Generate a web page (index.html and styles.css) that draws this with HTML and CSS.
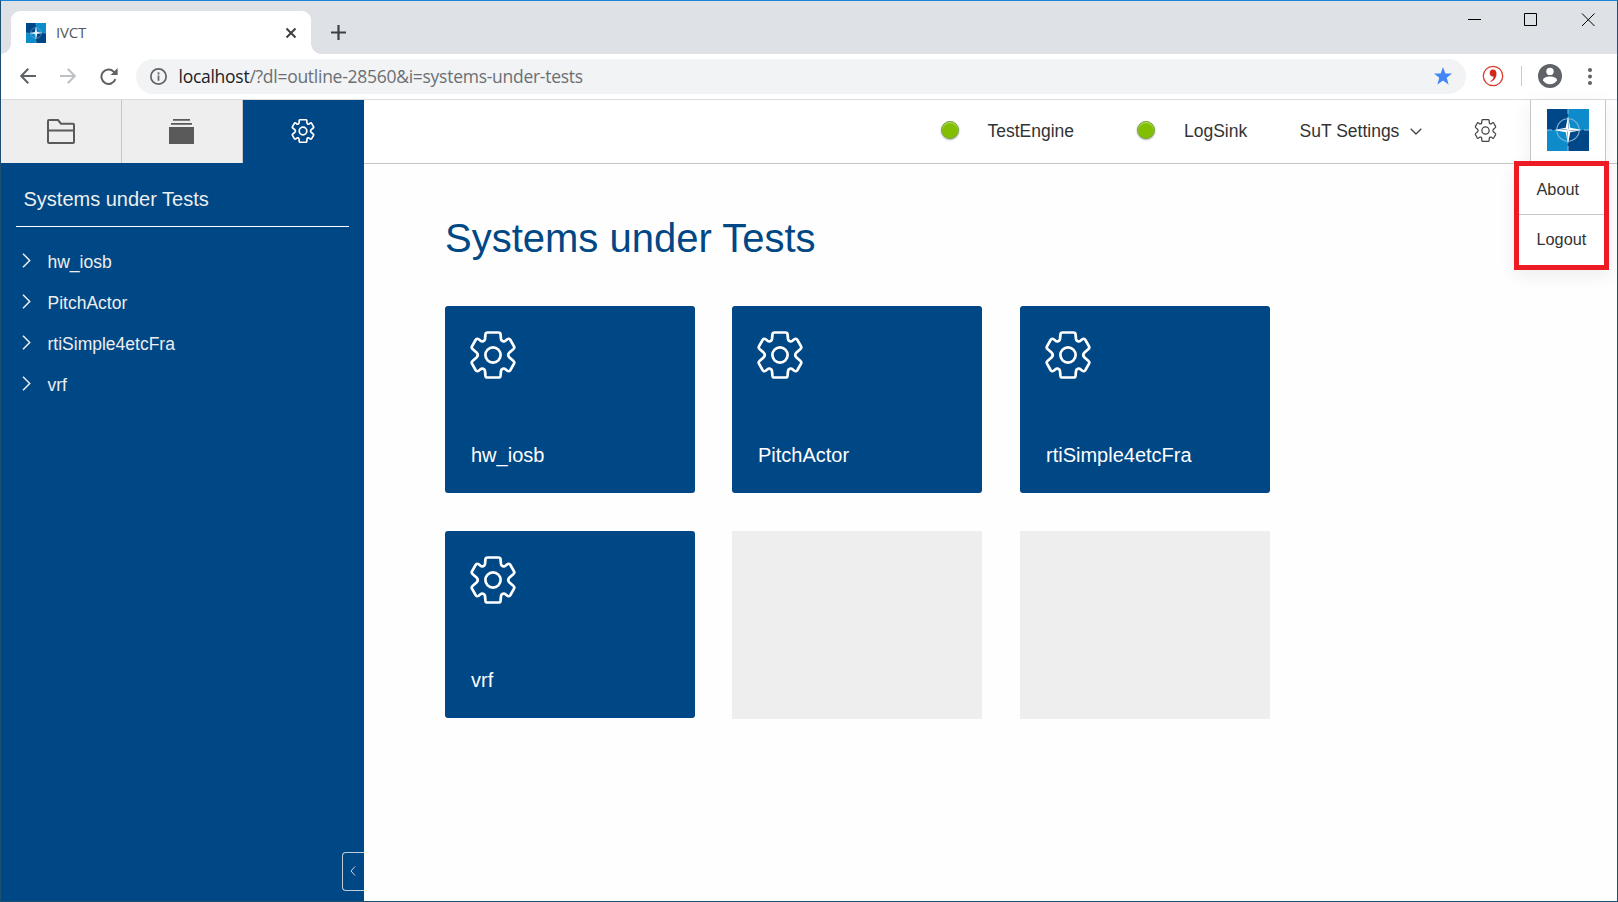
FILE: index.html
```html
<!DOCTYPE html>
<html lang="en">
<head>
<meta charset="utf-8">
<title>IVCT</title>
<link rel="stylesheet" href="styles.css">
</head>
<body>
<svg class="defs" aria-hidden="true">
  <symbol id="gear" viewBox="-24 -24 48 48">
    <path d="M-5.5-22.5H5.5Q7.3-22.5 7.5-21L8-16Q8.2-14.5 9.8-13.8Q11.3-13.2 12.5-14.2L14.3-15.7Q16-17 17.3-15.2L21-8.6Q21.8-7 20.5-6L16.5-2.6Q14 0 16.5 2.6L20.5 6Q21.8 7 21 8.6L17.3 15.2Q16 17 14.3 15.7L12.5 14.2Q11.3 13.2 9.8 13.8Q8.2 14.5 8 16L7.5 21Q7.3 22.5 5.5 22.5H-5.5Q-7.3 22.5-7.5 21L-8 16Q-8.2 14.5-9.8 13.8Q-11.3 13.2-12.5 14.2L-14.3 15.7Q-16 17-17.3 15.2L-21 8.6Q-21.8 7-20.5 6L-16.5 2.6Q-14 0-16.5-2.6L-20.5-6Q-21.8-7-21-8.6L-17.3-15.2Q-16-17-14.3-15.7L-12.5-14.2Q-11.3-13.2-9.8-13.8Q-8.2-14.5-8-16L-7.5-21Q-7.3-22.5-5.5-22.5Z"/>
    <circle r="7.6"/>
  </symbol>
  <symbol id="compass" viewBox="0 0 42 42">
    <path fill="#004787" d="M0 0h42v42H0z"/>
    <path fill="#0d8bca" d="M21 0h21v21H21zM0 21h21v21H0z"/>
    <path stroke="#8fc0df" stroke-width="1" d="M21 0v5M21 37v5M0 21h5M37 21h5"/>
    <circle cx="21" cy="21" r="11.2" fill="none" stroke="#7fb4d8" stroke-width="1.1"/>
    <path fill="#fff" d="M21 7l2.300 11.700L35 21l-11.700 2.300L21 35l-2.300-11.700L7 21l11.700-2.300z"/>
    <path fill="#0b5c9e" d="M21 21V9.500l1.200 8.800zM21 21h11.500l-8.800 1.200zM21 21v11.500l-1.200-8.800zM21 21H9.500l8.800-1.200z" opacity=".45"/>
  </symbol>
</svg>
<div class="window">
  <div class="tabstrip">
    <div class="tab">
      <svg class="favicon"><use href="#compass"/></svg>
      <span class="tab-title">IVCT</span>
      <svg class="tab-close" viewBox="0 0 12 12"><path d="M1.5 1.5l9 9M10.5 1.5l-9 9"/></svg>
    </div>
    <svg class="new-tab" viewBox="0 0 15 15"><path d="M7.5 0v15M0 7.5h15"/></svg>
    <div class="controls">
      <svg viewBox="0 0 14 14"><path d="M1 .5h13" transform="translate(0 6)"/></svg>
      <svg viewBox="0 0 14 14"><path d="M.5.5h12v12H.5z"/></svg>
      <svg viewBox="0 0 14 14"><path d="M1 .5l12.500 12.500M13.500 .5L1 13"/></svg>
    </div>
  </div>
  <div class="toolbar">
    <svg class="nav back" viewBox="0 0 16 16"><path d="M16 8H1.5M8.3.8L1.2 8l7.1 7.2"/></svg>
    <svg class="nav forward" viewBox="0 0 16 16"><path d="M0 8h14.5M7.7.8L14.8 8l-7.1 7.2"/></svg>
    <svg class="nav reload" viewBox="0 0 18 17"><path d="M15.4 11.2A7.2 7.2 0 1 1 13.7 3.6L15.5 5.4"/><path class="solid" d="M17.6 0v7h-7z"/></svg>
    <div class="omnibox">
      <svg class="info" viewBox="0 0 16 16"><circle cx="8" cy="8" r="7.2"/><path d="M8 7v5M8 4v2"/></svg>
      <span class="url"><b>localhost</b>/?dl=outline-28560&amp;i=systems-under-tests</span>
      <svg class="star" viewBox="0 0 18 18"><path d="M9 0l2.3 6.4 6.7.2-5.3 4.2 1.9 6.6L9 13.6l-5.6 3.8 1.9-6.6L0 6.6l6.700-.2z"/></svg>
    </div>
    <svg class="ext" viewBox="0 0 22 22"><circle cx="11" cy="11" r="9.7"/><path d="M10.7 4.6c2.2-.2 3.9 1.4 3.8 4.2 0 3.700-2.200 6.800-5.700 8.100l-.4-.8c2.100-1.200 3.200-2.800 3.200-4.700-1.900.7-3.900-.9-3.900-3.300 0-2 1.300-3.400 3-3.500z"/></svg>
    <span class="divider"></span>
    <svg class="person" viewBox="0 0 24 24"><circle cx="12" cy="12" r="12"/><circle class="cut" cx="12" cy="7.400" r="3.700"/><path class="cut" d="M5 16.200c0-2.500 3.800-3.700 7-3.700s7 1.200 7 3.700c-1.500 2.400-4 4-7 4s-5.500-1.600-7-4z"/></svg>
    <svg class="dots" viewBox="0 0 4 17"><circle cx="2" cy="2.100" r="2"/><circle cx="2" cy="8.500" r="2"/><circle cx="2" cy="14.900" r="2"/></svg>
  </div>
  <div class="app">
    <aside class="sidebar">
      <nav class="views">
        <div class="view"><svg class="folder" viewBox="0 0 28 25"><path d="M1 23V2q0-1 1-1h9l3 3.700h12q1 0 1 1V23q0 1-1 1H2q-1 0-1-1zM1 11.500h26"/></svg></div>
        <div class="view"><svg class="stack" viewBox="0 0 25 25"><path d="M0 8h25v17H0zM2 4h21v1.700H2zM4 0h17v1.700H4z"/></svg></div>
        <div class="view active"><svg class="gear gear-tab"><use href="#gear"/></svg></div>
      </nav>
      <h2 class="outline-title">Systems under Tests</h2>
      <ul class="tree">
        <li><svg viewBox="0 0 9 15"><path d="M1 .7l6.700 6.800L1 14.300"/></svg>hw_iosb</li>
        <li><svg viewBox="0 0 9 15"><path d="M1 .7l6.700 6.800L1 14.300"/></svg>PitchActor</li>
        <li><svg viewBox="0 0 9 15"><path d="M1 .7l6.700 6.800L1 14.300"/></svg>rtiSimple4etcFra</li>
        <li><svg viewBox="0 0 9 15"><path d="M1 .7l6.700 6.800L1 14.300"/></svg>vrf</li>
      </ul>
      <div class="collapse"><svg viewBox="0 0 6 10"><path d="M5 .5L1 5l4 4.500"/></svg></div>
    </aside>
    <main class="main">
      <header class="header">
        <span class="status"></span><span class="engine">TestEngine</span>
        <span class="status"></span><span class="sink">LogSink</span>
        <span class="settings">SuT Settings</span>
        <svg class="caret" viewBox="0 0 12 7"><path d="M.7.7L6 6l5.300-5.300"/></svg>
        <svg class="gear gear-header"><use href="#gear"/></svg>
        <div class="account">
          <svg class="logo"><use href="#compass"/></svg>
          <div class="menu"><div>About</div><div>Logout</div></div>
        </div>
      </header>
      <section class="content">
        <h1>Systems under Tests</h1>
        <div class="cards">
          <div class="card"><svg class="gear gear-card"><use href="#gear"/></svg><span>hw_iosb</span></div>
          <div class="card"><svg class="gear gear-card"><use href="#gear"/></svg><span>PitchActor</span></div>
          <div class="card"><svg class="gear gear-card"><use href="#gear"/></svg><span>rtiSimple4etcFra</span></div>
          <div class="card"><svg class="gear gear-card"><use href="#gear"/></svg><span>vrf</span></div>
          <div class="card empty"></div>
          <div class="card empty"></div>
        </div>
      </section>
    </main>
  </div>
</div>
</body>
</html>
```
FILE: styles.css
```css
* { box-sizing: border-box; }
body { margin: 0; font-family: "Liberation Sans", Arial, sans-serif; color: #333; }
svg { display: block; flex: none; fill: none; }
.defs { position: absolute; width: 0; height: 0; }
.window { width: 1618px; height: 902px; display: flex; flex-direction: column; overflow: hidden; border: 1px solid #1b5070; border-top-color: #1883d7; background: #fff; }

.tabstrip { height: 53px; display: flex; background: #dee1e6; padding: 10px 0 0 10px; }
.tab { position: relative; width: 300px; height: 43px; display: flex; align-items: center; background: #fff; border-radius: 9px 9px 0 0; padding: 0 15px 0; }
.tab::before, .tab::after { content: ""; position: absolute; bottom: 0; width: 10px; height: 10px; }
.tab::before { left: -10px; background: radial-gradient(circle at 0 0, transparent 9.5px, #fff 10px); }
.tab::after { right: -10px; background: radial-gradient(circle at 100% 0, transparent 9.5px, #fff 10px); }
.favicon { width: 20px; height: 20px; }
.tab-title { flex: 1; padding: 0 0 2px 10px; font: 400 15px "Open Sans", sans-serif; color: #55585c; letter-spacing: -.2px; }
.tab-close { width: 12px; height: 12px; stroke: #3c4043; stroke-width: 2; margin-right: -1px; }
.new-tab { width: 15px; height: 15px; margin: 14px 0 0 20px; stroke: #3c4043; stroke-width: 2.2; }
.controls { margin-left: auto; display: flex; gap: 43px; padding: 2px 22px 0 0; stroke: #000; }
.controls svg { width: 14px; height: 14px; }

.toolbar { height: 46px; display: flex; align-items: center; border-bottom: 1px solid #dadce0; padding: 0 20px 1px 19px; }
.nav { width: 16px; height: 16px; stroke: #5f6368; stroke-width: 2; }
.forward { margin-left: 24px; stroke: #bdc1c6; }
.reload { width: 18px; height: 17px; margin-left: 24px; }
.reload .solid { fill: #5f6368; stroke: none; }
.omnibox { width: 1330px; height: 35px; display: flex; align-items: center; background: #f1f3f4; border-radius: 18px; margin-left: 18px; padding: 0 14px 0 14px; }
.info { width: 17px; height: 17px; stroke: #5f6368; stroke-width: 1.6; }
.url { flex: 1; padding: 0 0 1px 11.500px; font: 400 17.500px "Open Sans", sans-serif; color: #6b6f74; letter-spacing: -.27px; }
.url b { font-weight: 400; color: #202124; }
.star { width: 18px; height: 18px; fill: #4285f4; }
.ext { width: 22px; height: 22px; margin-left: 16px; }
.ext circle { stroke: #dc3b2c; stroke-width: 1.3; }
.ext path { fill: #d3281c; }
.divider { width: 1px; height: 20px; background: #c8cacd; margin-left: 17px; }
.person { width: 24px; height: 24px; fill: #5f6368; margin-left: 16px; }
.cut { fill: #fff; }
.dots { width: 4px; height: 17px; fill: #5f6368; margin-left: 26px; }

.app { flex: 1; display: flex; min-height: 0; }
.sidebar { position: relative; width: 363px; background: #004785; color: #eee; }
.views { display: grid; grid-template-columns: 121px 121px 121px; height: 63px; }
.view { display: flex; align-items: center; justify-content: center; background: #eee; border-right: 1px solid #c6c6c6; padding-bottom: 1px; }
.active { background: #004785; border: 0; }
.folder { width: 28px; height: 25px; stroke: #5a5a5a; stroke-width: 2; }
.stack { width: 25px; height: 25px; fill: #5a5a5a; margin-left: -1px; }
.gear { stroke-width: 2.700; }
.gear-tab { width: 24px; height: 24px; stroke: #fff; stroke-width: 3.400; margin-left: -2px; }
.outline-title { height: 64px; margin: 0 15px; padding: 24px 0 0 7.500px; border-bottom: 1px solid #fff; font-size: 20px; line-height: 24px; font-weight: 400; }
.tree { list-style: none; margin: 0; padding: 15px 0 0 21px; font-size: 17.500px; }
.tree li { height: 41px; display: flex; align-items: center; }
.tree svg { width: 9px; height: 15px; stroke: #eee; stroke-width: 1.500; margin: -4px 16.500px 0 0; }
.collapse { position: absolute; right: 0; bottom: 10px; width: 22px; height: 39px; display: flex; align-items: center; justify-content: center; border: 1px solid #c0cbd8; border-right: 0; border-radius: 4px 0 0 4px; padding: 0 2px 1px 0; }
.collapse svg { width: 6px; height: 10px; stroke: #ccd5df; }

.main { flex: 1; background: #fefefe; }
.header { height: 64px; display: flex; align-items: center; background: #fff; border-bottom: 1px solid #c6c6c6; padding-left: 577px; font-size: 17.500px; white-space: nowrap; }
.status { width: 18px; height: 18px; border-radius: 50%; background: #82bf00; border: 1px solid #78a637; box-shadow: 0 1px 2px #0005, inset 0 1px 1px #c5e38a; margin-top: -3px; }
.engine { width: 149.500px; margin-left: 28.500px; }
.sink { width: 88px; margin-left: 29px; }
.settings { width: 110.500px; margin-left: 27.500px; }
.caret { width: 12px; height: 7px; stroke: #444; stroke-width: 1.300; margin-top: -1px; }
.gear-header { width: 23px; height: 23px; stroke: #444; stroke-width: 2.600; margin: -3px 0 0 51.500px; }
.account { position: relative; width: 76px; height: 64px; margin: 0 11px 0 auto; border: solid #c6c6c6; border-width: 0 1px; background: #fff; box-shadow: 0 5px 20px #0001; padding: 9px 16px; }
.logo { width: 42px; height: 42px; }
.menu { position: absolute; top: 61px; right: -4px; width: 95px; height: 109px; border: 5px solid #ed1c24; background: #fff; box-shadow: 0 6px 16px #0001; font-size: 16.300px; }
.menu div { height: 50px; line-height: 49px; padding-left: 17.500px; }
.menu div:first-child { height: 49px; line-height: 47px; border-bottom: 1px solid #c6c6c6; }
.content { padding: 49px 0 0 81px; }
h1 { margin: 0; height: 93px; font-size: 40px; line-height: 50px; font-weight: 400; color: #004785; }
.cards { display: grid; grid-template-columns: 250px 251px 250px; grid-auto-rows: 187px; gap: 38px 37px; }
.card { width: 250px; display: flex; flex-direction: column; justify-content: space-between; background: #004785; color: #fff; border-radius: 3px; padding: 24.500px 24px 26px; font-size: 20px; line-height: 24px; }
.card span { padding-left: 2px; }
.gear-card { width: 48px; height: 48px; stroke: #fff; }
.empty { height: 188px; background: #eee; border-radius: 0; }
```
